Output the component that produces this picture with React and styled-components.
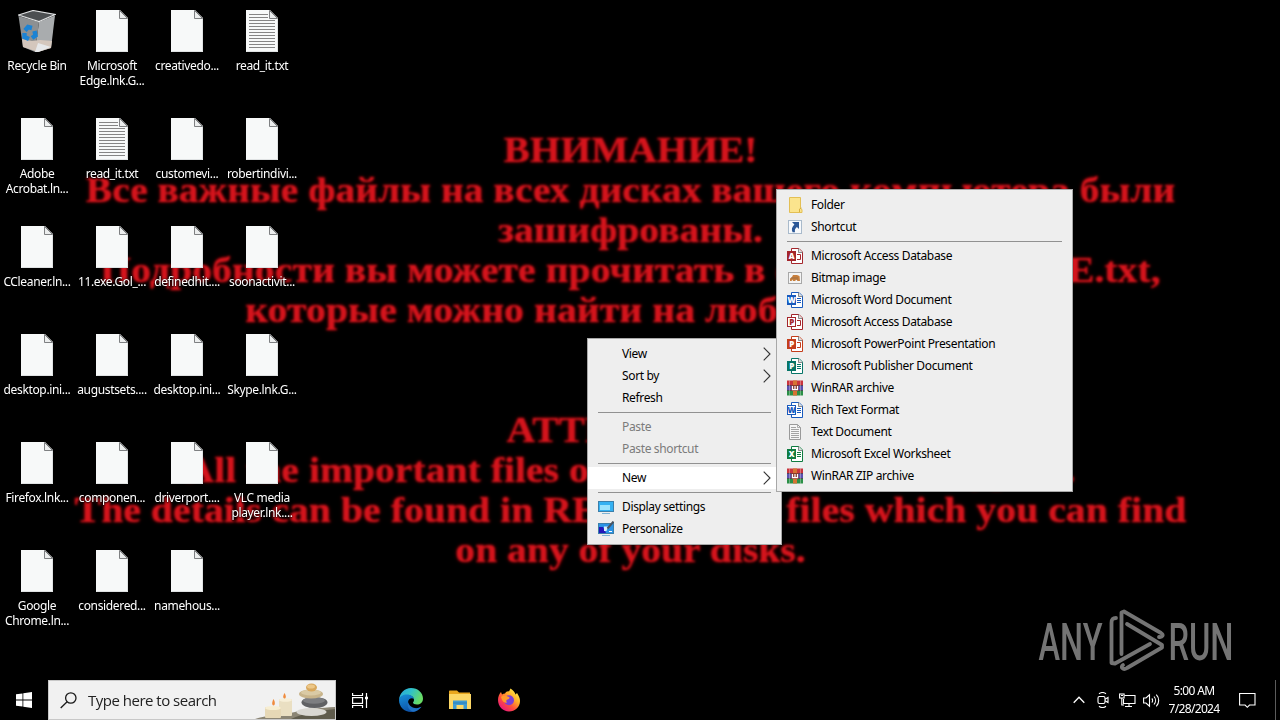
import styled, { createGlobalStyle } from "styled-components";

const UI_FONT = `"Noto Sans", "Open Sans", sans-serif`;

const GlobalStyle = createGlobalStyle`
    * {
        box-sizing: border-box;
    }

    body {
        margin: 0;
        background: #000;
        overflow: hidden;
        font-family: ${UI_FONT};
    }
`;

const Screen = styled.div`
    position: relative;
    width: 1280px;
    height: 720px;
    display: flex;
    flex-direction: column;
    background: #000;
    overflow: hidden;
    user-select: none;
`;

const Wallpaper = styled.div`
    position: absolute;
    inset: 0;
    padding-top: 130px;
    padding-right: 19px;
    filter: blur(0.8px);
`;

const WallpaperLine = styled.div`
    display: flex;
    justify-content: center;
    height: 40px;
    line-height: 40px;
    font-family: "Liberation Serif", serif;
    font-size: 36px;
    font-weight: 700;
    white-space: pre;
    color: #d3141c;
    text-shadow: 0 0 3px rgba(190, 0, 10, 0.8);
    transform: scaleX(${({ $stretch }) => $stretch || 1});
`;

const DesktopGrid = styled.div`
    position: relative;
    flex: 1;
    display: grid;
    grid-auto-flow: column;
    grid-template-rows: repeat(6, 108px);
    grid-auto-columns: 75px;
    justify-content: start;
    padding-top: 8px;
`;

const DesktopItem = styled.div`
    display: flex;
    flex-direction: column;
    align-items: center;
    padding-right: 1px;

    svg {
        display: block;
        margin: 2px 0 6px 0;
    }
`;

const ItemLabel = styled.span`
    width: 74px;
    text-align: center;
    font-size: 12px;
    line-height: 15px;
    letter-spacing: -0.35px;
    white-space: pre;
    color: #fff;
    text-shadow: 0 1px 2px #000, 0 0 2px #000;
    display: flex;
    flex-direction: column;
`;

const Menu = styled.div`
    position: absolute;
    left: ${({ $x }) => $x}px;
    top: ${({ $y }) => $y}px;
    width: ${({ $width }) => $width}px;
    padding: 4px 0;
    background: #eee;
    border: 1px solid #a8a8a8;
`;

const MenuItem = styled.div`
    display: flex;
    align-items: center;
    height: 22px;
    padding: 0 10px;
    font-size: 12px;
    letter-spacing: -0.36px;
    white-space: pre;
    color: ${({ $disabled }) => ($disabled ? "#7b7b7b" : "#000")};
    background: ${({ $active }) => ($active ? "#fff" : "transparent")};
`;

const MenuIcon = styled.span`
    width: 16px;
    height: 16px;
    margin-right: 8px;

    svg {
        display: block;
    }
`;

const MenuText = styled.span`
    flex: 1;
    line-height: 22px;
`;

const MenuSeparator = styled.div`
    height: 1px;
    margin: 3px 10px;
    background: #919191;
`;

const Watermark = styled.div`
    position: absolute;
    left: 1036px;
    top: 606px;
`;

const Taskbar = styled.div`
    position: relative;
    display: flex;
    height: 40px;
    background: #000;
`;

const TaskButton = styled.div`
    display: flex;
    align-items: center;
    justify-content: center;
    width: ${({ $width }) => $width || 48}px;
    height: 40px;
`;

const SearchBox = styled.div`
    display: flex;
    align-items: center;
    width: 288px;
    height: 40px;
    padding-left: 11px;
    background: #f1f1f1;
    border: 1px solid #c8c8c8;
`;

const SearchText = styled.span`
    flex: 1;
    margin-left: 11px;
    font-family: "Open Sans", sans-serif;
    font-size: 15px;
    font-weight: 400;
    letter-spacing: -0.5px;
    color: #222;
`;

const Tray = styled.div`
    display: flex;
    align-items: center;
    margin-left: auto;
`;

const Clock = styled.div`
    display: flex;
    flex-direction: column;
    width: 62px;
    text-align: center;
    font-size: 12px;
    line-height: 18px;
    letter-spacing: -0.65px;
    white-space: nowrap;
    color: #fff;
`;

const ShowDesktop = styled.div`
    width: 5px;
    height: 40px;
    margin-left: 6px;
    border-left: 1px solid #5c5c5c;
`;

const RecycleBinIcon = () => (
    <svg width="38" height="42" viewBox="0 0 38 42">
        <path d="M0.5 6 L21 12 L17 42 L5 37 Z" fill="#8d9092" />
        <path d="M21 12 L37 5.5 L33 38 L20 42 L17 42 Z" fill="#a9acae" />
        <path d="M4 29 L14 31 L22 30 L34 31 L33 38 L20 42 L5 37 Z" fill="#d4c7bd" />
        <path d="M17 42 L20 33 L33 37 L20 42 Z" fill="#e6e8ea" />
        <path d="M0.5 5 L15 0.5 L37 4.5 L21 11.5 Z" fill="#4c4f51" stroke="#dfe1e2" strokeWidth="1.2" />
        <g fill="none" stroke="#1c83d4" strokeWidth="4.4">
            <path d="M7 20.5 L10 17 L14 18" />
            <path d="M16.5 21 L17.5 25.500 L14 28" />
            <path d="M11 29 L6.500 27 L6.5 23" />
        </g>
    </svg>
);

const FileIcon = ({ lined }) => (
    <svg width="32" height="42" viewBox="0 0 32 42">
        <path d="M0 0 H24 L32 8 V42 H0 Z" fill="#f7f9f9" />
        <path d="M0.5 41.5 H31.5 V8.5" fill="none" stroke="#dfe2e3" />
        {lined &&
            [4, 7, 10, 13, 16, 19, 22, 25, 28, 31, 34, 37].map((y) => (
                <path key={y} d={`M3 ${y + 0.5} H${y < 9 ? 22 : 29}`} stroke="#858585" />
            ))}
        <path d="M23.5 0.5 V8.5 H31.5 Z" fill="#eceeee" stroke="#707375" strokeWidth="0.9" />
    </svg>
);

const ChevronRight = () => (
    <svg width="8" height="14" viewBox="0 0 8 14" fill="none" stroke="#333" strokeWidth="1.1">
        <path d="M0.7 0.7 L7 7 L0.7 13.3" />
    </svg>
);

const FolderGlyph = () => (
    <svg width="16" height="16" viewBox="0 0 16 16">
        <path d="M2.5 0.5 H13.5 V11.5 L15 12.5 V15.5 H2.5 Z" fill="#fbe48d" stroke="#e3bf55" />
        <path d="M12.5 15 V12 L14.5 11" fill="none" stroke="#d8b040" />
    </svg>
);

const ShortcutGlyph = () => (
    <svg width="16" height="16" viewBox="0 0 16 16">
        <rect x="1.5" y="1.5" width="13" height="13" fill="#f7f9fc" stroke="#a9bacb" />
        <path d="M5 3 H12 V10 L9.9 8 C8 9.5 7.6 11 8 13.2 H5.6 C4.2 10.5 4.8 8 7.4 5.4 Z" fill="#2b5797" />
    </svg>
);

const OfficeGlyph = ({ color, letter, outlined, kind }) => (
    <svg width="16" height="16" viewBox="0 0 16 16">
        <path d="M4.5 0.5 H12 L15.5 4 V15.5 H4.5 Z" fill="#fff" stroke={color} />
        <path d="M11.5 0.5 V4.5 H15.5" fill="#ddd" stroke="#707070" strokeWidth="0.8" />
        {kind === "lines" ? (
            <path d="M10 6.5 H14 M10 8.5 H14 M10 10.5 H14" stroke={color} strokeWidth="1" />
        ) : (
            <path d="M10 6.5 H13.5 V11.5 H10" fill="none" stroke={color} strokeWidth="1" />
        )}
        <rect
            x="0.5"
            y="3.5"
            width="8"
            height="9"
            fill={outlined ? "#fff" : color}
            stroke={color}
        />
        <text
            x="4.5"
            y="10.9"
            textAnchor="middle"
            fontFamily="Open Sans, sans-serif"
            fontSize="8"
            fontWeight="800"
            fill={outlined ? color : "#fff"}
        >
            {letter}
        </text>
    </svg>
);

const BitmapGlyph = () => (
    <svg width="16" height="16" viewBox="0 0 16 16">
        <rect x="1.5" y="2.5" width="13" height="11" fill="#f4f4f4" stroke="#a8a8a8" />
        <path d="M3 11 V8.5 L5 7 L6 5 H10 L12.5 6 L13 11 H10.5 L9.5 9.5 L8 11 H6 L5.5 9.5 L4.5 11 Z" fill="#c87f3c" />
        <path d="M4 8 H9 M10 7 V10" stroke="#8a6a4c" strokeWidth="0.7" />
    </svg>
);

const RarGlyph = () => (
    <svg width="16" height="16" viewBox="0 0 16 16">
        <rect width="16" height="5" y="0.5" fill="#c9343d" />
        <rect width="16" height="5" y="5.5" fill="#5a4fae" />
        <rect width="16" height="5" y="10.5" fill="#2b8f46" />
        <path d="M0 5.5 H16 M0 10.5 H16" stroke="#37313c" strokeWidth="0.7" />
        <path d="M2.5 0.5 V15.5 M13.5 0.5 V15.5" stroke="#fff" strokeOpacity="0.4" strokeWidth="0.8" />
        <rect x="6" y="0.5" width="4" height="15" fill="#d67332" />
        <rect x="4.500" y="5" width="7" height="6" fill="#8a3a2c" />
        <path d="M5.5 6 V9.6 H10.5 V6 M8 6 V9.6" fill="none" stroke="#fff" strokeWidth="1.2" />
    </svg>
);

const TextGlyph = () => (
    <svg width="16" height="16" viewBox="0 0 16 16">
        <path d="M2.5 0.5 H10.5 L13.5 3.5 V15.5 H2.5 Z" fill="#f6f6f6" stroke="#9a9a9a" />
        <path d="M4 3.5 H9 M4 5.5 H12 M4 7.5 H12 M4 9.5 H12 M4 11.5 H12 M4 13.5 H12" stroke="#9b9b9b" strokeWidth="0.9" />
        <path d="M10.5 0.5 V3.5 H13.5" fill="none" stroke="#9a9a9a" strokeWidth="0.8" />
    </svg>
);

const DisplayGlyph = () => (
    <svg width="16" height="16" viewBox="0 0 16 16">
        <rect x="0.5" y="2.5" width="15" height="10" fill="#35b1f2" stroke="#3c7faa" />
        <rect x="2" y="6" width="10" height="5" fill="#9be3fd" />
        <path d="M4 14.5 H12" stroke="#7fb4d6" />
    </svg>
);

const PersonalizeGlyph = () => (
    <svg width="16" height="16" viewBox="0 0 16 16">
        <rect x="0.5" y="2.5" width="15" height="10" fill="#2b93e6" stroke="#3c7faa" />
        <path d="M1 6 H5 L8 12 H1 Z" fill="#2417b8" />
        <path d="M6 5.500 H10 L8.500 10 H6 Z" fill="#d9f0fc" />
        <path d="M9.500 7.500 L15.5 0.5" stroke="#4a5563" strokeWidth="2" />
        <path d="M11 10.5 H14" stroke="#fff" />
        <path d="M4 14.5 H12" stroke="#7fb4d6" />
    </svg>
);

const AnyRunLogo = () => (
    <svg width="210" height="68" viewBox="0 0 210 68" fill="none">
        <g fontFamily="Roboto, sans-serif" fontSize="51" fontWeight="500" fill="#747474">
            <text x="2.500" y="53.500" textLength="64" lengthAdjust="spacingAndGlyphs">ANY</text>
            <text x="132.500" y="53.500" textLength="65" lengthAdjust="spacingAndGlyphs">RUN</text>
        </g>
        <g stroke="#747474" strokeWidth="3.8" strokeLinecap="round" strokeLinejoin="round">
            <path d="M80 12 C76 12 75.5 14 75.5 17 V57 L79 57.5 L114 38" />
            <path d="M85.5 48 V6.5 L88 5.5 L125 27 C128 29 126.5 31.5 123 31" />
            <path d="M91 18 L126 39 V41.5 L91 62 C87 64.5 84 61 87 59" />
        </g>
    </svg>
);

const WindowsLogo = () => (
    <svg width="16" height="16" viewBox="0 0 16 16" fill="#fff">
        <path d="M0 2.3 L6.5 1.4 V7.6 H0 Z M7.3 1.3 L16 0 V7.6 H7.3 Z M0 8.4 H6.5 V14.6 L0 13.7 Z M7.3 8.4 H16 V16 L7.3 14.7 Z" />
    </svg>
);

const SearchGlyph = () => (
    <svg width="17" height="17" viewBox="0 0 17 17" fill="none" stroke="#1a1a1a" strokeWidth="1.3">
        <circle cx="10.8" cy="6" r="5.2" />
        <path d="M7.1 9.8 L0.7 16" />
    </svg>
);

const SearchArt = () => (
    <svg width="80" height="38" viewBox="0 0 80 38">
        <path d="M0 38 C10 34 28 34 40 31 C52 27 66 27 80 26 V38 Z" fill="#8b8574" />
        <path d="M36 38 C48 32 64 30 80 28 V38 Z" fill="#5f5b4c" />
        <rect x="24" y="18" width="13" height="17" rx="1" fill="#eadfc2" />
        <ellipse cx="30.5" cy="19" rx="6.5" ry="1.8" fill="#f7efd8" />
        <rect x="10" y="26" width="16" height="11" rx="1" fill="#e6d8b6" />
        <ellipse cx="18" cy="27" rx="8" ry="2" fill="#f7eed2" />
        <path d="M29.500 12 C31.500 15 31 17.500 29.500 17.500 C27.500 17 28 15 29.500 12 Z" fill="#f08b3c" />
        <path d="M18.500 18 C20.500 21 20 24.500 18.500 24.500 C16.500 24 17 21 18.500 18 Z" fill="#f08b3c" />
        <ellipse cx="56.500" cy="31" rx="15" ry="4" fill="#d9d7d2" />
        <ellipse cx="59.500" cy="21.500" rx="13" ry="5.500" fill="#606164" />
        <ellipse cx="59" cy="19.500" rx="11" ry="3.2" fill="#7d7e81" />
        <ellipse cx="56" cy="13" rx="12" ry="4.500" fill="#c8b48b" />
        <ellipse cx="56" cy="11.500" rx="10" ry="3" fill="#dacaa5" />
        <ellipse cx="56.500" cy="6.500" rx="5.500" ry="4" fill="#d8a75c" />
        <ellipse cx="56" cy="5.500" rx="4" ry="2" fill="#ecc788" />
    </svg>
);

const TaskViewGlyph = () => (
    <svg width="17" height="17" viewBox="0 0 17 17" fill="none" stroke="#fff" strokeWidth="1.2">
        <path d="M0.6 1 V3.500 H10.500 V1" />
        <rect x="0.6" y="5.600" width="9.900" height="5.800" />
        <path d="M0.6 16 V13.500 H10.500 V16" />
        <path d="M14.500 1 V16" />
        <path d="M13 6 H16" strokeWidth="2.500" />
    </svg>
);

const EdgeLogo = () => (
    <svg width="24" height="24" viewBox="0 0 24 24">
        <defs>
            <linearGradient id="edgeTop" x1="0" y1="0" x2="1" y2="0.4">
                <stop offset="0" stopColor="#2aa5dc" />
                <stop offset="0.5" stopColor="#2fc1ca" />
                <stop offset="1" stopColor="#68dc66" />
            </linearGradient>
            <linearGradient id="edgeSide" x1="0" y1="0" x2="0.5" y2="1">
                <stop offset="0" stopColor="#1790da" />
                <stop offset="1" stopColor="#0c4fa5" />
            </linearGradient>
        </defs>
        <path d="M0 12 C0.500 5 5.500 0 12 0 C19 0 24 5 24 10.500 C24 14.500 21 16.500 18 16.500 C15.500 16.500 14 15.600 14 14.800 C14 14.200 15 13.800 15 12 C15 9.500 12.500 7 8.500 7 C4 7 1 9.500 0 12 Z" fill="url(#edgeTop)" />
        <path d="M0 12 C0.500 8.500 4 6.500 8 6.500 C12 6.500 14.600 8.800 15 11 C13 9.300 9 10.500 9 14.500 C9 18.500 13.500 21.500 18 20.500 C20 20 21.500 19.300 22.500 18.800 C20 22.300 16.500 24 12.300 24 C5 24 0 18.500 0 12 Z" fill="url(#edgeSide)" />
        <path d="M9 14 C7.500 18 10 22.500 14 23.700 C17.500 23.400 20.500 21.500 22.500 18.800 C17 21.800 10.500 19.500 9 14 Z" fill="#2072c4" />
    </svg>
);

const ExplorerLogo = () => (
    <svg width="22" height="20" viewBox="0 0 22 20">
        <path d="M0 1.500 C0 0.800 0.500 0.500 1 0.500 H8 L10 2.500 H21 V7 H0 Z" fill="#e9a71e" />
        <rect y="4" width="22" height="15" fill="#fcd766" />
        <path d="M4 19 V10.500 H18 V19 H14.500 V15 H7.500 V19 Z" fill="#3f9bd2" />
        <path d="M4 13 H18" stroke="#2a7fb7" />
    </svg>
);

const FirefoxLogo = () => (
    <svg width="24" height="24" viewBox="0 0 24 24">
        <defs>
            <linearGradient id="foxBody" x1="0.9" y1="0.1" x2="0.2" y2="0.95">
                <stop offset="0" stopColor="#fff04a" />
                <stop offset="0.35" stopColor="#ffad29" />
                <stop offset="0.65" stopColor="#ff4f3d" />
                <stop offset="1" stopColor="#e9157e" />
            </linearGradient>
        </defs>
        <path d="M1 12 C1 9 2 6 4 4 L5 6.500 C6 5.800 7 5.500 8 5.500 C9 4 10.500 3 12 3.500 L13.500 0.500 C16.500 2.500 18 4.500 18.500 6.500 L20 5 C22 8 23 10.500 23 13 C23 19 18 23.500 12 23.500 C6 23.500 1 18.500 1 12 Z" fill="url(#foxBody)" />
        <circle cx="12" cy="12.300" r="5" fill="#7b3fd5" />
        <path d="M4 9 C7 6 9 8 12 9 C13 9.500 12.500 11 10.500 11.500 C9 12 9 13.500 10 14.500 C7 15.500 5 13 4 9 Z" fill="#ff9a2b" />
    </svg>
);

const TrayUpGlyph = () => (
    <svg width="12" height="8" viewBox="0 0 12 8" fill="none" stroke="#fff" strokeWidth="1.3">
        <path d="M0.7 6.800 L6 1.300 L11.300 6.800" />
    </svg>
);

const MeetGlyph = () => (
    <svg width="14" height="16" viewBox="0 0 14 16" fill="none" stroke="#fff" strokeWidth="1.1">
        <path d="M3 1.800 C5 0.300 8 0.300 10 1.800 M3 14.200 C5 15.700 8 15.700 10 14.200" />
        <rect x="2" y="4.500" width="7" height="7" rx="1.500" />
        <path d="M9 7.200 L12 5.500 V10.500 L9 8.800" />
    </svg>
);

const NetworkGlyph = () => (
    <svg width="17" height="15" viewBox="0 0 17 15" fill="none" stroke="#fff" strokeWidth="1.1">
        <path d="M5.500 2.500 H16 V10.500 H4.500 V6 M10 10.500 V13.500 M6 13.500 H13" />
        <rect x="0.600" y="1" width="4.500" height="4" />
        <path d="M2.800 5 V12 H5 M2 2.500 H4" />
    </svg>
);

const VolumeGlyph = () => (
    <svg width="17" height="15" viewBox="0 0 17 15" fill="none" stroke="#fff" strokeWidth="1.1">
        <path d="M0.600 5 H3 L6.500 1.800 V13.200 L3 10 H0.600 Z" />
        <path d="M8.800 5.500 C9.900 6.500 9.900 8.500 8.800 9.500 M11 3.500 C13 5.800 13 9.200 11 11.500 M13.300 1.600 C16.500 5 16.500 10 13.300 13.400" />
    </svg>
);

const NotificationGlyph = () => (
    <svg width="17" height="17" viewBox="0 0 17 17" fill="none" stroke="#fff" strokeWidth="1.1">
        <path d="M0.600 1.500 H16 V13 H10.500 L8.300 15.300 L6.100 13 H0.600 Z" />
    </svg>
);

const wallpaperLines = [
    { text: "ВНИМАНИЕ!", stretch: 1.094 },
    { text: "Все важные файлы на всех дисках вашего компьютера были", stretch: 1.097 },
    { text: "зашифрованы.", stretch: 1.1 },
    { text: "Подробности вы можете прочитать в файлах README.txt,", stretch: 1.104 },
    { text: "которые можно найти на любом из дисков.", stretch: 1.106 },
    { text: "" },
    { text: "" },
    { text: "ATTENTION!", stretch: 1.1 },
    { text: "All the important files on your disks were encrypted.", stretch: 1.102 },
    { text: "The details can be found in README.txt files which you can find", stretch: 1.105 },
    { text: "on any of your disks.", stretch: 1.1 },
];

const desktopItems = [
    { lines: ["Recycle Bin"], type: "bin" },
    { lines: ["Adobe", "Acrobat.ln..."] },
    { lines: ["CCleaner.ln..."] },
    { lines: ["desktop.ini..."] },
    { lines: ["Firefox.lnk..."] },
    { lines: ["Google", "Chrome.ln..."] },
    { lines: ["Microsoft", "Edge.lnk.G..."] },
    { lines: ["read_it.txt"], type: "text" },
    { lines: ["11.exe.Gol_..."] },
    { lines: ["augustsets...."] },
    { lines: ["componen..."] },
    { lines: ["considered..."] },
    { lines: ["creativedo..."] },
    { lines: ["customevi..."] },
    { lines: ["definedhit...."] },
    { lines: ["desktop.ini..."] },
    { lines: ["driverport...."] },
    { lines: ["namehous..."] },
    { lines: ["read_it.txt"], type: "text" },
    { lines: ["robertindivi..."] },
    { lines: ["soonactivit..."] },
    { lines: ["Skype.lnk.G..."] },
    { lines: ["VLC media", "player.lnk...."] },
];

const contextItems = [
    { label: "View", arrow: true },
    { label: "Sort by", arrow: true },
    { label: "Refresh" },
    { separator: true },
    { label: "Paste", disabled: true },
    { label: "Paste shortcut", disabled: true },
    { separator: true },
    { label: "New", arrow: true, active: true },
    { separator: true },
    { label: "Display settings", icon: <DisplayGlyph /> },
    { label: "Personalize", icon: <PersonalizeGlyph /> },
];

const newItems = [
    { label: "Folder", icon: <FolderGlyph /> },
    { label: "Shortcut", icon: <ShortcutGlyph /> },
    { separator: true },
    { label: "Microsoft Access Database", icon: <OfficeGlyph color="#a4262c" letter="A" /> },
    { label: "Bitmap image", icon: <BitmapGlyph /> },
    { label: "Microsoft Word Document", icon: <OfficeGlyph color="#185abd" letter="W" kind="lines" /> },
    { label: "Microsoft Access Database", icon: <OfficeGlyph color="#a4262c" letter="P" outlined /> },
    { label: "Microsoft PowerPoint Presentation", icon: <OfficeGlyph color="#c43e1c" letter="P" /> },
    { label: "Microsoft Publisher Document", icon: <OfficeGlyph color="#077568" letter="P" kind="lines" /> },
    { label: "WinRAR archive", icon: <RarGlyph /> },
    { label: "Rich Text Format", icon: <OfficeGlyph color="#185abd" letter="W" kind="lines" outlined /> },
    { label: "Text Document", icon: <TextGlyph /> },
    { label: "Microsoft Excel Worksheet", icon: <OfficeGlyph color="#107c41" letter="X" kind="lines" /> },
    { label: "WinRAR ZIP archive", icon: <RarGlyph /> },
];

const PopupMenu = ({ items, x, y, width }) => (
    <Menu $x={x} $y={y} $width={width}>
        {items.map((item, index) =>
            item.separator ? (
                <MenuSeparator key={index} />
            ) : (
                <MenuItem key={index} $disabled={item.disabled} $active={item.active}>
                    <MenuIcon>{item.icon}</MenuIcon>
                    <MenuText>{item.label}</MenuText>
                    {item.arrow && <ChevronRight />}
                </MenuItem>
            )
        )}
    </Menu>
);

const App = () => {
    return (
        <>
            <GlobalStyle />
            <Screen>
                <Wallpaper>
                    {wallpaperLines.map((line, index) => (
                        <WallpaperLine key={index} $stretch={line.stretch}>
                            {line.text}
                        </WallpaperLine>
                    ))}
                </Wallpaper>

                <DesktopGrid>
                    {desktopItems.map((item, index) => (
                        <DesktopItem key={index}>
                            {item.type === "bin" ? <RecycleBinIcon /> : <FileIcon lined={item.type === "text"} />}
                            <ItemLabel>
                                {item.lines.map((line) => (
                                    <span key={line}>{line}</span>
                                ))}
                            </ItemLabel>
                        </DesktopItem>
                    ))}
                </DesktopGrid>

                <Watermark>
                    <AnyRunLogo />
                </Watermark>

                <Taskbar>
                    <TaskButton><WindowsLogo /></TaskButton>
                    <SearchBox>
                        <SearchGlyph />
                        <SearchText>Type here to search</SearchText>
                        <SearchArt />
                    </SearchBox>
                    <TaskButton><TaskViewGlyph /></TaskButton>
                    <TaskButton $width={54}><EdgeLogo /></TaskButton>
                    <TaskButton $width={44}><ExplorerLogo /></TaskButton>
                    <TaskButton $width={54}><FirefoxLogo /></TaskButton>

                    <Tray>
                        <TaskButton $width={24}><TrayUpGlyph /></TaskButton>
                        <TaskButton $width={24}><MeetGlyph /></TaskButton>
                        <TaskButton $width={24}><NetworkGlyph /></TaskButton>
                        <TaskButton $width={24}><VolumeGlyph /></TaskButton>
                        <Clock>
                            <span>5:00 AM</span>
                            <span>7/28/2024</span>
                        </Clock>
                        <TaskButton $width={44}><NotificationGlyph /></TaskButton>
                        <ShowDesktop />
                    </Tray>
                </Taskbar>

                <PopupMenu items={contextItems} x={587} y={338} width={195} />
                <PopupMenu items={newItems} x={776} y={189} width={297} />
            </Screen>
        </>
    );
};

export default App;
